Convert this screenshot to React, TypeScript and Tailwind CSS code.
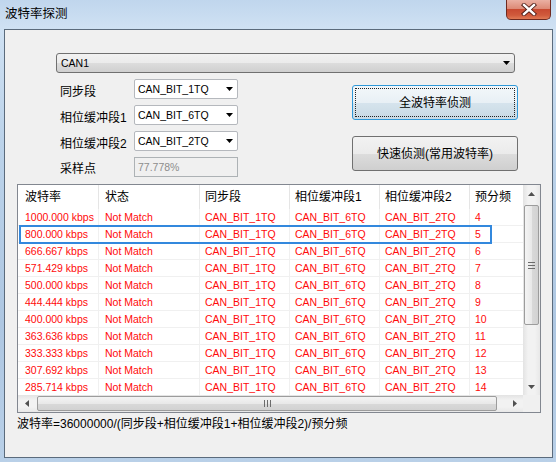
import React from "react";

const F = "font-['Liberation_Sans','Noto_Sans_CJK_SC',sans-serif]";

const rows: [string, string][] = [
  ["1000.000 kbps", "4"],
  ["800.000 kbps", "5"],
  ["666.667 kbps", "6"],
  ["571.429 kbps", "7"],
  ["500.000 kbps", "8"],
  ["444.444 kbps", "9"],
  ["400.000 kbps", "10"],
  ["363.636 kbps", "11"],
  ["333.333 kbps", "12"],
  ["307.692 kbps", "13"],
  ["285.714 kbps", "14"],
];

function Tri({ dir = "down", color = "#000" }: { dir?: "down" | "up" | "left" | "right"; color?: string }) {
  const d =
    dir === "down"
      ? "M0 0H7L3.5 4Z"
      : dir === "up"
      ? "M0 4H7L3.5 0Z"
      : dir === "left"
      ? "M4 0V7L0 3.5Z"
      : "M0 0V7L4 3.5Z";
  const w = dir === "down" || dir === "up" ? 7 : 4;
  const h = dir === "down" || dir === "up" ? 4 : 7;
  return (
    <svg width={w} height={h} viewBox={`0 0 ${w} ${h}`}>
      <path d={d} fill={color} />
    </svg>
  );
}

function SmallCombo({ text }: { text: string }) {
  return (
    <div className="relative w-[104px] h-[20px] bg-white border border-[#b5b8bd] rounded-[2px] flex items-center pl-[3px]">
      <span className="text-[10.5px] text-black leading-none">{text}</span>
      <div className="absolute left-[91px] top-[7px] flex">
        <Tri />
      </div>
    </div>
  );
}

const cols = [
  { w: "w-[81px]", pl: "pl-[7px]" },
  { w: "w-[101px]", pl: "pl-[6px]" },
  { w: "w-[90px]", pl: "pl-[5px]" },
  { w: "w-[90px]", pl: "pl-[5px]" },
  { w: "w-[90px]", pl: "pl-[5px]" },
  { w: "w-[80px]", pl: "pl-[5px]" },
];

export default function App() {
  const headers = ["波特率", "状态", "同步段", "相位缓冲段1", "相位缓冲段2", "预分频"];
  return (
    <div
      className={`${F} relative w-[556px] h-[462px] overflow-hidden flex flex-col bg-[linear-gradient(180deg,#c0d6ed_0%,#cfe1f3_6%,#bcd3ea_30%,#aec7e2_70%,#b9d0e8_100%)]`}
    >
      {/* title bar */}
      <div className="h-[29px] shrink-0 flex items-center pl-[5px]">
        <span className="text-[12.5px] text-black leading-none">波特率探测</span>
      </div>
      <div className="absolute left-[506px] top-0 w-[45px] h-[20px] rounded-b-[5px] border border-t-0 border-[#6e2a20] bg-[linear-gradient(180deg,#eab0a3_0%,#dd8a77_45%,#c84a31_50%,#d05a3c_80%,#e07a55_100%)] flex items-center justify-center">
        <svg width="16" height="13" viewBox="0 0 16 13">
          <path d="M3 2L13 11M13 2L3 11" stroke="#4a1a14" strokeWidth="4.2" strokeLinecap="square" />
          <path d="M3 2L13 11M13 2L3 11" stroke="#ffffff" strokeWidth="2.4" strokeLinecap="square" />
        </svg>
      </div>

      {/* client area */}
      <div className="ml-[4px] w-[549px] h-[429px] border border-[#5b6b7c] bg-[#f0f0f0] flex flex-col text-black">
        {/* CAN1 combo */}
        <div className="mt-[23px] ml-[51px] relative w-[459px] h-[20px] rounded-[3px] border border-[#707070] bg-[linear-gradient(180deg,#f2f2f2,#ebebeb_50%,#dddddd_50%,#cfcfcf)] flex items-center pl-[4px]">
          <span className="text-[10.5px] leading-none">CAN1</span>
          <div className="absolute left-[446px] top-[7px] flex">
            <Tri />
          </div>
        </div>

        {/* middle */}
        <div className="mt-[6px] flex">
          <div className="ml-[55px] grid grid-cols-[74px_104px] auto-rows-[20px] gap-y-[6px]">
            <div className="text-[12px] leading-none flex items-center pt-[5px]">同步段</div>
            <SmallCombo text="CAN_BIT_1TQ" />
            <div className="text-[12px] leading-none flex items-center pt-[5px]">相位缓冲段1</div>
            <SmallCombo text="CAN_BIT_6TQ" />
            <div className="text-[12px] leading-none flex items-center pt-[5px]">相位缓冲段2</div>
            <SmallCombo text="CAN_BIT_2TQ" />
            <div className="text-[12px] leading-none flex items-center pt-[3px]">采样点</div>
            <div className="w-[104px] h-[20px] border border-[#adb2b5] bg-[#f0f0f0] flex items-center pl-[3px]">
              <span className="text-[10.5px] leading-none text-[#8d8d8d]">77.778%</span>
            </div>
          </div>
          <div className="ml-[114px] mt-[6px] flex flex-col gap-[16px]">
            <div className="relative w-[166px] h-[35px] rounded-[3px] border border-[#2f98d8] bg-[linear-gradient(180deg,#f3f7fa,#e8f0f5_50%,#d6e4ed_50%,#c8d9e4)] flex items-center justify-center">
              <div className="absolute inset-[2px] border border-dotted border-[#222]" />
              <span className="text-[12px] leading-none">全波特率侦测</span>
            </div>
            <div className="w-[166px] h-[35px] rounded-[3px] border border-[#707070] bg-[linear-gradient(180deg,#f2f2f2,#ebebeb_50%,#dddddd_50%,#cfcfcf)] flex items-center justify-center">
              <span className="text-[12px] leading-none">快速侦测(常用波特率)</span>
            </div>
          </div>
        </div>

        {/* list */}
        <div className="mt-[7px] ml-[12px] w-[524px] h-[229px] border border-[#828790] bg-white flex">
          <div className="relative w-[505px] flex flex-col">
            <div className="h-[210px] overflow-hidden">
              <div className="w-[540px]">
                <div className="h-[24px] flex">
                  {headers.map((h, i) => (
                    <div
                      key={h}
                      className={`${cols[i].w} ${cols[i].pl} shrink-0 h-full border-r border-[#e5e5e5] flex items-center text-[12px] leading-none text-black`}
                    >
                      {h}
                    </div>
                  ))}
                </div>
                {rows.map((r) => (
                  <div key={r[0]} className="h-[17px] flex border-b border-[#f0f0f0]">
                    {[r[0], "Not Match", "CAN_BIT_1TQ", "CAN_BIT_6TQ", "CAN_BIT_2TQ", r[1]].map((c, i) => (
                      <div
                        key={i}
                        className={`${cols[i].w} ${cols[i].pl} shrink-0 h-full border-r border-[#f0f0f0] flex items-center text-[10.5px] leading-none text-[#ff0a0a]`}
                      >
                        {c}
                      </div>
                    ))}
                  </div>
                ))}
              </div>
            </div>
            <div className="absolute left-[1px] top-[40px] w-[473px] h-[19px] border-2 border-[#3388dd]" />
            {/* horizontal scrollbar */}
            <div className="h-[17px] flex bg-[linear-gradient(180deg,#e3e3e3,#f2f2f2_30%,#f2f2f2_70%,#e8e8e8)]">
              <div className="w-[17px] h-full flex items-center justify-center">
                <Tri dir="left" color="#505050" />
              </div>
              <div className="ml-[2px] w-[460px] h-[15px] mt-[1px] rounded-[2px] border border-[#9c9c9c] bg-[linear-gradient(180deg,#f4f4f4,#e9e9e9_50%,#d9d9d9_51%,#d2d2d2)] flex items-center justify-center gap-[2px]">
                <div className="w-px h-[7px] bg-[#6c6c6c]" />
                <div className="w-px h-[7px] bg-[#6c6c6c]" />
                <div className="w-px h-[7px] bg-[#6c6c6c]" />
              </div>
              <div className="ml-auto w-[17px] h-full flex items-center justify-center">
                <Tri dir="right" color="#505050" />
              </div>
            </div>
          </div>
          {/* vertical scrollbar */}
          <div className="w-[17px] flex flex-col">
            <div className="h-[210px] flex flex-col bg-[linear-gradient(90deg,#e3e3e3,#f2f2f2_30%,#f2f2f2_70%,#e8e8e8)]">
              <div className="h-[18px] flex items-center justify-center">
                <Tri dir="up" color="#505050" />
              </div>
              <div className="ml-[1px] mt-[2px] w-[15px] h-[120px] rounded-[2px] border border-[#9c9c9c] bg-[linear-gradient(90deg,#f4f4f4,#e9e9e9_50%,#d9d9d9_51%,#d2d2d2)] flex flex-col items-center justify-center gap-[2px]">
                <div className="w-[7px] h-px bg-[#6c6c6c]" />
                <div className="w-[7px] h-px bg-[#6c6c6c]" />
                <div className="w-[7px] h-px bg-[#6c6c6c]" />
              </div>
              <div className="mt-auto h-[17px] flex items-center justify-center">
                <Tri dir="down" color="#505050" />
              </div>
            </div>
            <div className="h-[17px] bg-[#f0f0f0]" />
          </div>
        </div>

        {/* formula */}
        <div className="mt-[4px] ml-[12px] text-[12px] leading-[14px]">
          波特率=36000000/(同步段+相位缓冲段1+相位缓冲段2)/预分频
        </div>
      </div>
    </div>
  );
}
